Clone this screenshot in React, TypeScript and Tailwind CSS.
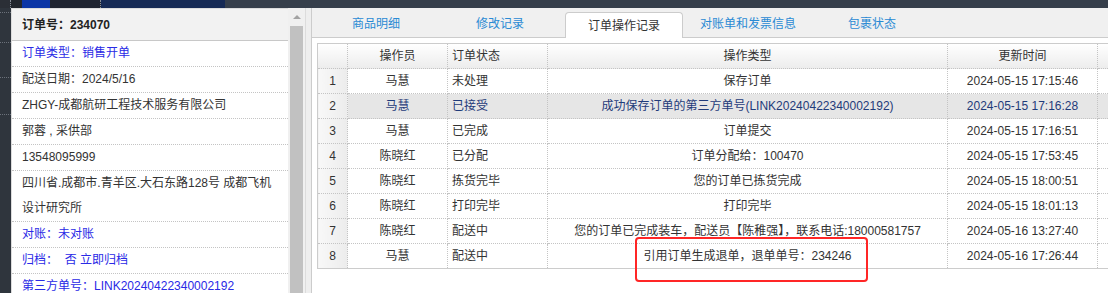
const leftRows: { text: string; blue?: boolean }[] = [
  { text: "订单类型：销售开单", blue: true },
  { text: "配送日期：2024/5/16" },
  { text: "ZHGY-成都航研工程技术服务有限公司" },
  { text: "郭蓉 , 采供部" },
  { text: "13548095999" },
  { text: "四川省.成都市.青羊区.大石东路128号 成都飞机设计研究所" },
  { text: "对账：未对账", blue: true },
  { text: "归档：  否 立即归档", blue: true },
  { text: "第三方单号：LINK20240422340002192", blue: true },
];

const tabs = ["商品明细", "修改记录", "订单操作记录", "对账单和发票信息", "包裹状态"];

const logs = [
  ["马慧", "未处理", "保存订单", "2024-05-15 17:15:46"],
  ["马慧", "已接受", "成功保存订单的第三方单号(LINK20240422340002192)", "2024-05-15 17:16:28"],
  ["马慧", "已完成", "订单提交", "2024-05-15 17:16:51"],
  ["陈晓红", "已分配", "订单分配给：100470", "2024-05-15 17:53:45"],
  ["陈晓红", "拣货完毕", "您的订单已拣货完成", "2024-05-15 18:00:51"],
  ["陈晓红", "打印完毕", "打印完毕", "2024-05-15 18:01:13"],
  ["陈晓红", "配送中", "您的订单已完成装车，配送员【陈稚强】，联系电话:18000581757", "2024-05-16 13:27:40"],
  ["马慧", "配送中", "引用订单生成退单，退单单号：234246", "2024-05-16 17:26:44"],
];

const cell = "border border-dotted border-[#c4c4c4] h-[25px] p-0 whitespace-nowrap";

export default function App() {
  return (
    <div className="w-[1108px] h-[293px] overflow-hidden bg-[#363f4b] text-[12px] text-[#333] font-['Liberation_Sans','Noto_Sans_CJK_SC',sans-serif]">
      {/* top strip */}
      <div className="flex h-[8px]">
        <div className="w-[11px] bg-[#2b2f36] border-r border-dotted border-[#8a8f98]" />
        <div className="w-[11px] bg-[#22262d]" />
        <div className="w-[28px] bg-[#0b35a6]" />
        <div className="w-[51px] bg-[#1f2430] border-r border-dotted border-[#8a8f98]" />
        <div className="w-[124px] bg-[#162a55]" />
        <div className="flex-1 bg-[#363f4b]" />
      </div>

      <div className="flex h-[285px]">
        {/* left dark strip */}
        <div className="w-[11px] bg-[#2f353d] flex flex-col">
          <div className="h-[5px] border-b border-dotted border-[#6b717a]" />
          <div className="h-[30px] border-b border-dotted border-[#6b717a]" />
          <div className="h-[35px] border-b border-dotted border-[#6b717a]" />
          <div className="h-[37px] border-b border-dotted border-[#6b717a]" />
        </div>

        {/* order info panel */}
        <div className="w-[277px] bg-white border-l border-t border-[#dcdcdc] flex flex-col">
          <div className="h-[32px] shrink-0 bg-[#f2f2f2] border-b border-[#c8c8c8] pl-[10px] flex items-center font-bold text-[#222]">
            订单号：234070
          </div>
          {leftRows.map((r, i) => (
            <div
              key={i}
              className={`pl-[10px] pr-[10px] leading-[25px] border-b border-dotted border-[#c4c4c4] whitespace-pre-wrap ${r.blue ? "text-[#2a2ae6]" : "text-[#333]"}`}
            >
              {r.text}
            </div>
          ))}
        </div>

        {/* scrollbar */}
        <div className="w-[17px] bg-[#f0f0f0] flex flex-col">
          <div className="h-[18px] shrink-0 flex items-center justify-center">
            <div className="w-0 h-0 border-l-[4px] border-r-[4px] border-b-[4px] border-l-transparent border-r-transparent border-b-[#a3a3a3]" />
          </div>
          <div className="flex-1 mx-[2px] bg-[#c1c1c1]" />
        </div>

        <div className="w-[6px] bg-[#eeeeee] border-l border-[#dcdcdc]" />

        {/* right panel */}
        <div className="flex-1 relative bg-white border-l border-[#cccccc] overflow-hidden">
          <div className="h-[30px] bg-[#f0f0f0] border-b border-[#cccccc] flex items-end gap-[6px] pl-[5px]">
            {tabs.map((t, i) =>
              i === 2 ? (
                <div
                  key={t}
                  className="w-[118px] h-[26px] -mb-px bg-white border border-b-0 border-[#cccccc] rounded-t-[4px] flex items-center justify-center text-[#333]"
                >
                  {t}
                </div>
              ) : (
                <div key={t} className="w-[118px] h-[26px] flex items-center justify-center text-[#2a8ad4]">
                  {t}
                </div>
              )
            )}
          </div>

          <div className="pt-[5px] pl-[5px]">
            <table className="table-fixed border-collapse border border-[#cccccc] w-[830px]">
              <colgroup>
                <col className="w-[30px]" />
                <col className="w-[100px]" />
                <col className="w-[100px]" />
                <col className="w-[400px]" />
                <col className="w-[150px]" />
                <col />
              </colgroup>
              <thead>
                <tr className="bg-linear-to-b from-white to-[#ececec] font-normal">
                  <th className={`${cell} font-normal`} />
                  <th className={`${cell} font-normal text-center`}>操作员</th>
                  <th className={`${cell} font-normal text-left pl-[4px]`}>订单状态</th>
                  <th className={`${cell} font-normal text-center`}>操作类型</th>
                  <th className={`${cell} font-normal text-center`}>更新时间</th>
                  <th className={`${cell} font-normal`} />
                </tr>
              </thead>
              <tbody>
                {logs.map((row, i) => {
                  const hl = i === 1;
                  const tone = hl ? "bg-[#e6e6e6] text-[#1f3b7a]" : "";
                  return (
                    <tr key={i}>
                      <td className={`${cell} text-center bg-linear-to-r from-[#f8f8f8] to-[#ececec]`}>{i + 1}</td>
                      <td className={`${cell} text-center ${tone}`}>{row[0]}</td>
                      <td className={`${cell} text-left pl-[4px] ${tone}`}>{row[1]}</td>
                      <td className={`${cell} text-center ${tone}`}>{row[2]}</td>
                      <td className={`${cell} text-center ${tone}`}>{row[3]}</td>
                      <td className={`${cell} ${tone}`} />
                    </tr>
                  );
                })}
              </tbody>
            </table>
          </div>

          {/* annotation box */}
          <div className="absolute left-[323px] top-[229px] w-[233px] h-[45px] border-2 border-[#ff2626] rounded-[4px]" />
        </div>
      </div>
    </div>
  );
}
